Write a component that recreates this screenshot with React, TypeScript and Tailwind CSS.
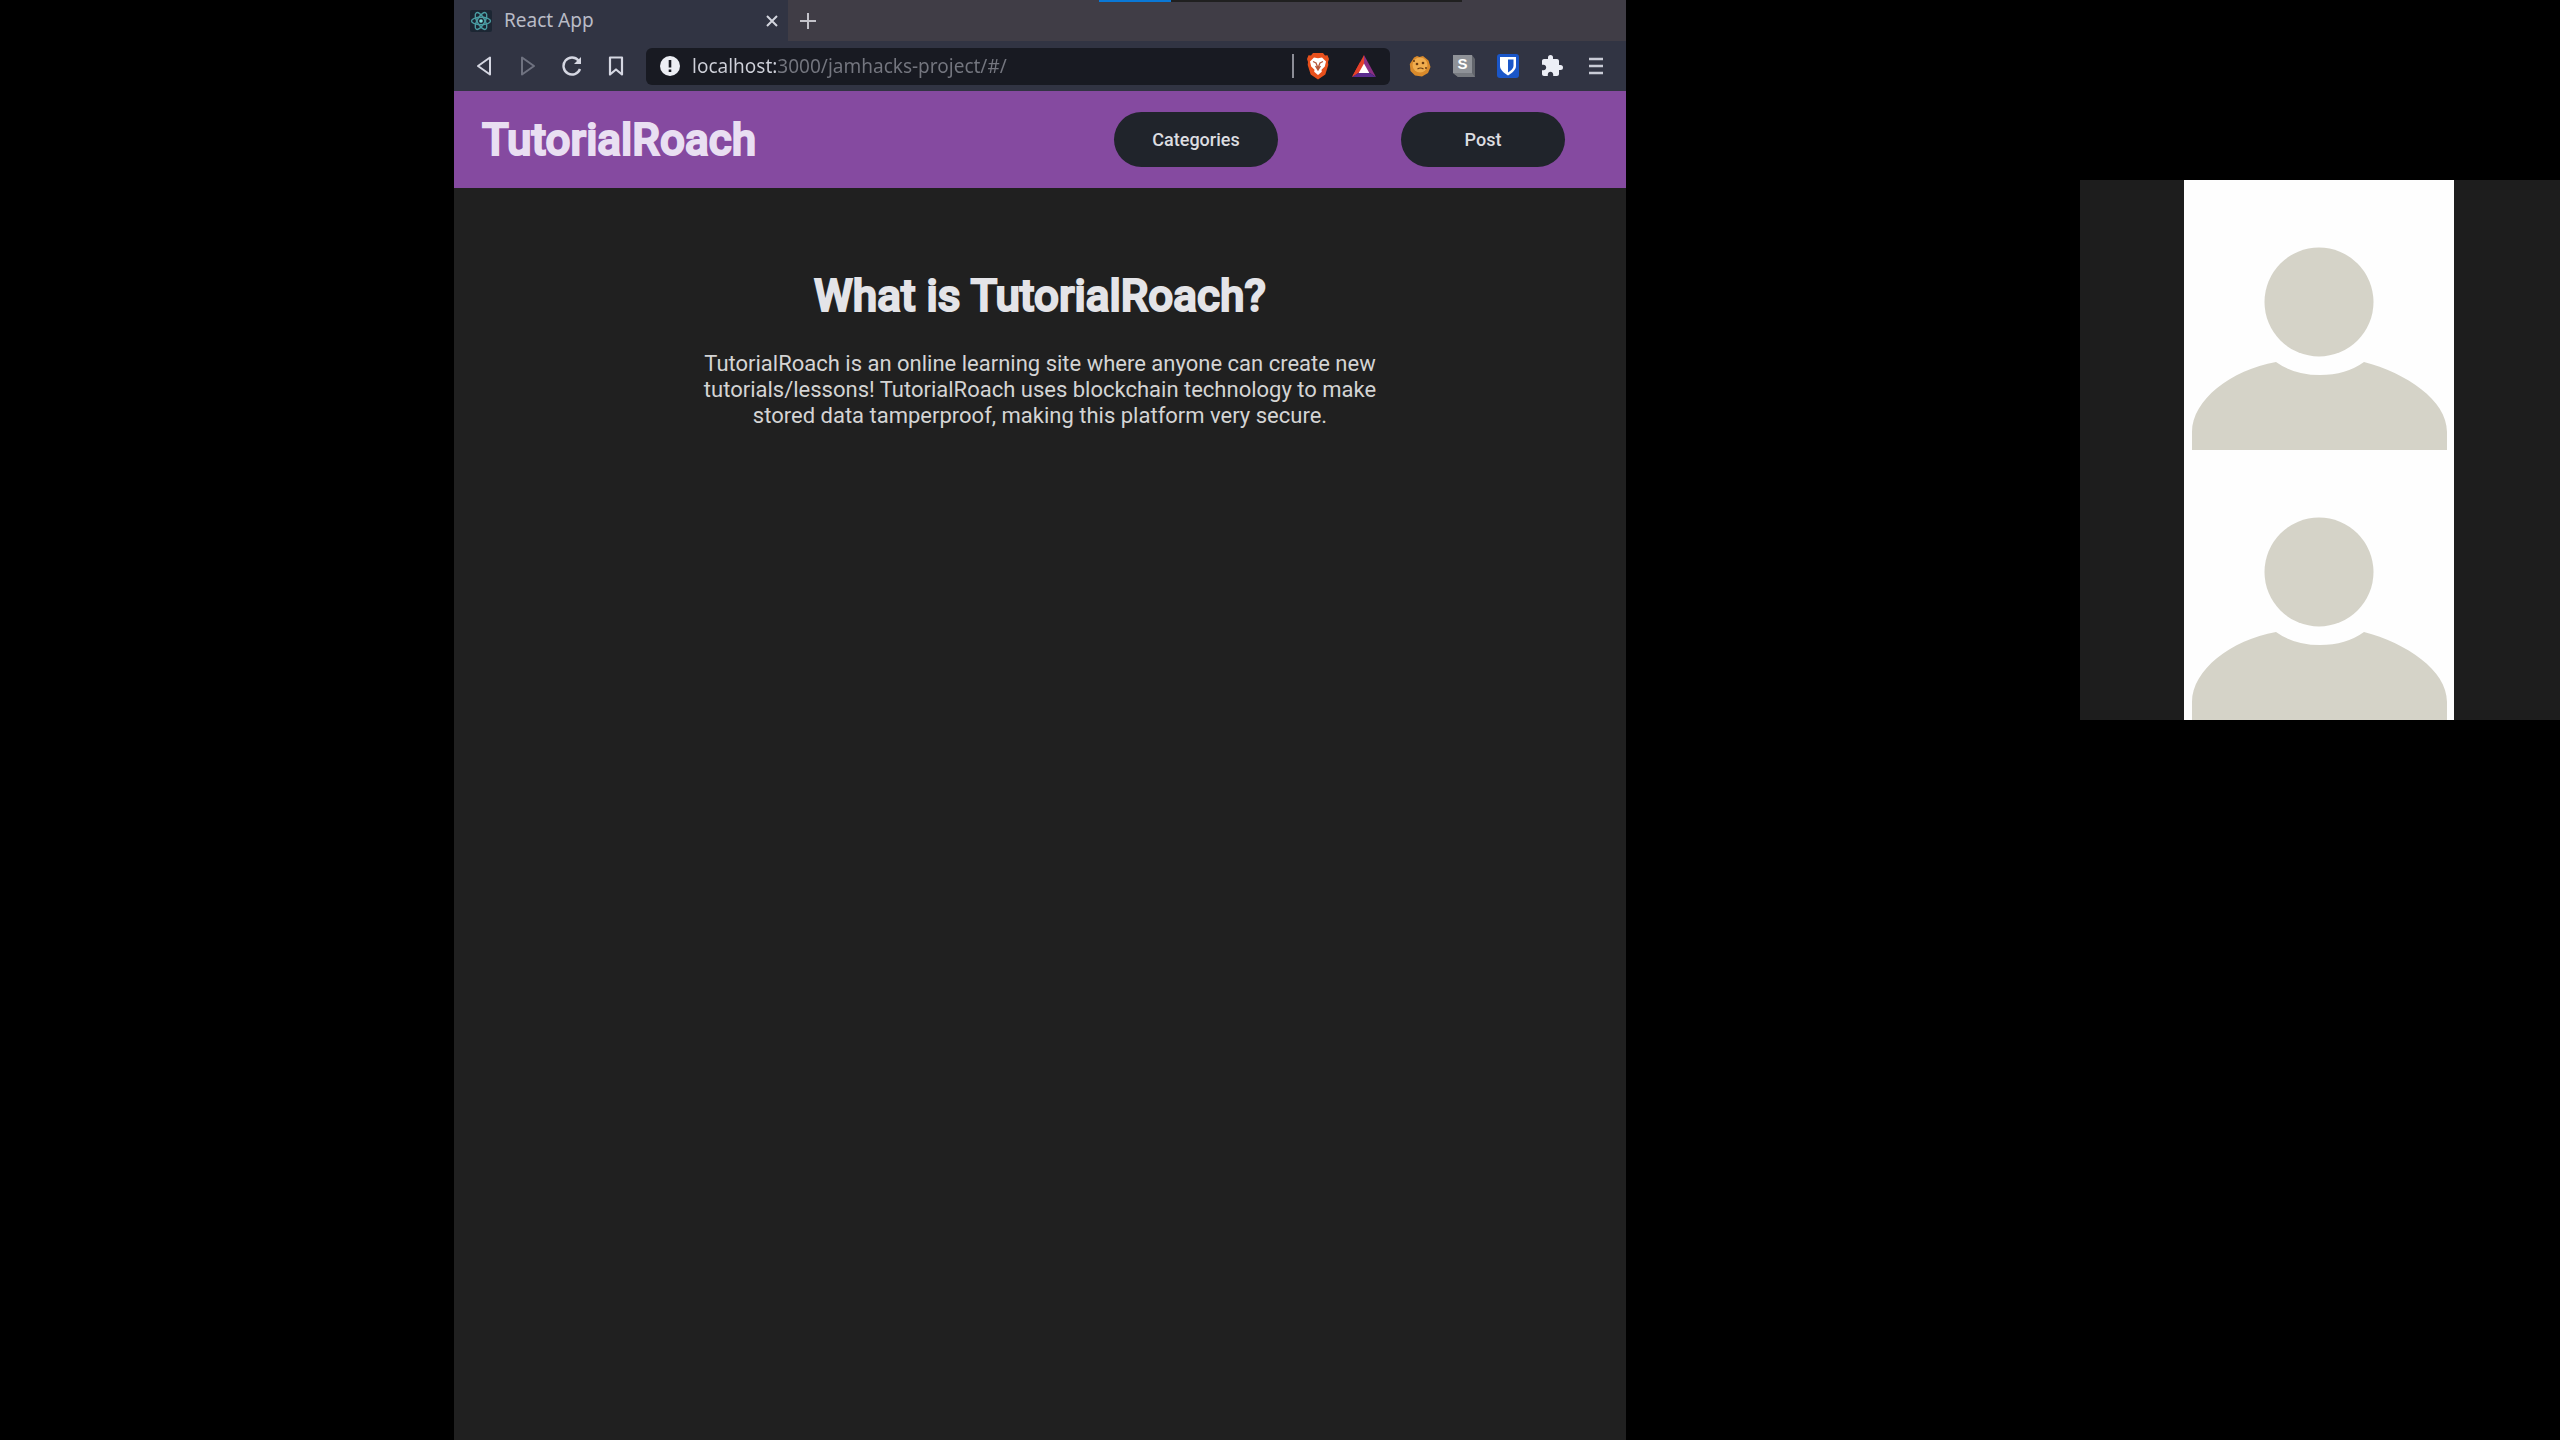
import type { ReactNode } from "react";
import { MdExtension } from "react-icons/md";

function ReactIcon() {
  return (
    <svg viewBox="0 0 22 22" className="size-[22px]" fill="none" stroke="#4a9da3" strokeWidth="1.4">
      <rect width="22" height="22" rx="2" fill="#1c2633" stroke="none" />
      <ellipse cx="11" cy="11" rx="9.5" ry="3.8" />
      <ellipse cx="11" cy="11" rx="9.5" ry="3.8" transform="rotate(60 11 11)" />
      <ellipse cx="11" cy="11" rx="9.5" ry="3.8" transform="rotate(120 11 11)" />
      <circle cx="11" cy="11" r="1.8" fill="#7fe0dc" stroke="none" />
    </svg>
  );
}

function BraveIcon() {
  return (
    <svg viewBox="0 0 24 28" className="h-7 w-6">
      <path d="M7 1h10l2 2.5 2.500-.3L23 7l-1 3 .3 3-3 9.500L12 27.500l-7.300-5L1.700 13 2 10 1 7l1.500-3.800 2.500.3z" fill="#e8501c" />
      <path d="M8 5.500l4 .8 4-.8 4 4-1.200 5-3.300 3.200.3 2L12 23l-3.800-3.300.3-2-3.300-3.200L4 9.500z" fill="#fff" />
      <path d="M7 9.500l3 1.500 2 5 2-5 3-1.500M9.500 14l2.500 4 2.500-4" fill="none" stroke="#b4583c" strokeWidth="1.300" />
    </svg>
  );
}

function BatIcon() {
  return (
    <svg viewBox="0 0 24 24" className="size-6">
      <path d="M12 1L0 23l12-8z" fill="#e5402a" />
      <path d="M12 1l12 22-12-8z" fill="#8c2f86" />
      <path d="M0 23h24l-12-8z" fill="#5a2c8e" />
      <path d="M0 23l8-5.500V8.300z" fill="#e5402a" />
      <path d="M12 9.500l5.300 9.500H6.700z" fill="#fff" />
    </svg>
  );
}

function CookieIcon() {
  return (
    <svg viewBox="0 0 22 22" className="size-[22px]">
      <path d="M5 2.500L8 1l2.500 1L14 1l5.500 4.500L21.500 12 19 18l-6 3.500-7-1L1.500 16 .8 9l2-3z" fill="#d98a2b" />
      <circle cx="11" cy="10" r="7.500" fill="#f0ad4e" />
      <g fill="#6b3c12">
        <circle cx="8" cy="9" r="1.300" />
        <circle cx="14" cy="8" r="1.300" />
        <circle cx="5" cy="6" r="1" />
        <circle cx="17" cy="13" r="1" />
      </g>
      <path d="M8.500 14q3-2 6 0" fill="none" stroke="#6b3c12" strokeWidth="1.200" />
    </svg>
  );
}

function StylusIcon() {
  return (
    <svg viewBox="0 0 24 24" className="size-6">
      <path d="M20 1l3 4v18H6l-5-4z" fill="#62656c" />
      <path d="M1 19l5 4h17l-3-4z" fill="#777a80" />
      <path d="M1 1h19v18H1z" fill="#8f9298" />
      <text x="10.500" y="15" textAnchor="middle" fill="#fff" fontSize="15" fontWeight="700" fontFamily="Liberation Sans, sans-serif">
        S
      </text>
    </svg>
  );
}

function BitwardenIcon() {
  return (
    <svg viewBox="0 0 24 24" className="size-6">
      <rect x="1" width="22" height="24" rx="3" fill="#1a56c8" />
      <path d="M4 3h16v9c0 4-4 7-8 9.500C8 19 4 16 4 12z" fill="#fff" />
      <path d="M12 5.500h5.500V12c0 2.500-2.500 4.800-5.500 6.500z" fill="#1a56c8" />
    </svg>
  );
}

function Avatar() {
  return (
    <svg viewBox="0 0 270 270" className="block w-[270px] bg-[#fefefe]" fill="#d5d3c8">
      <circle cx="135" cy="122" r="54.500" />
      <path d="M8 270V252C8 220 47 190 92 182Q110 195 136 195T180 182C222 193 263 220 263 252V270Z" />
    </svg>
  );
}

function IconButton({ label, children }: { label: string; children: ReactNode }) {
  return (
    <button aria-label={label} className="flex w-11 items-center justify-center">
      {children}
    </button>
  );
}

function Browser() {
  return (
    <div className="font-['Noto_Sans',sans-serif] text-[#b9bbc6]">
      <div className="relative flex h-[41px] items-center bg-[#403d46]">
        <div className="flex h-full w-[334px] items-center bg-[#313443] pl-4">
          <ReactIcon />
          <span className="ml-3 text-[19px]">React App</span>
          <button aria-label="Close tab" className="mr-2.5 ml-auto">
            <svg viewBox="0 0 12 12" className="size-3" stroke="#d3d5de" strokeWidth="2">
              <path d="M1 1l10 10M11 1L1 11" />
            </svg>
          </button>
        </div>
        <button aria-label="New tab" className="ml-3">
          <svg viewBox="0 0 16 16" className="size-4" stroke="#c4c3ca" strokeWidth="2">
            <path d="M8 0v16M0 8h16" />
          </svg>
        </button>
        <div className="absolute top-0 left-[55%] flex h-0.5 w-[31%] bg-[#202020]">
          <div className="w-1/5 bg-[#0a78d6]" />
        </div>
      </div>

      <div className="flex h-[50px] items-center bg-[#313443] px-2">
        <IconButton label="Back">
          <svg viewBox="0 0 16 20" className="h-5 w-4" fill="none" stroke="#d5d7e2" strokeWidth="2" strokeLinejoin="round">
            <path d="M14 1.500v17L2 10z" />
          </svg>
        </IconButton>
        <IconButton label="Forward">
          <svg viewBox="0 0 16 20" className="h-5 w-4" fill="none" stroke="#6f7280" strokeWidth="2" strokeLinejoin="round">
            <path d="M2 1.500v17L14 10z" />
          </svg>
        </IconButton>
        <IconButton label="Reload">
          <svg viewBox="0 0 20 20" className="size-5" fill="none" stroke="#d5d7e2" strokeWidth="2.400">
            <path d="M16.500 4.500A8.500 8.500 0 1 0 18 13" />
            <path d="M19 1v7h-7z" fill="#d5d7e2" stroke="none" />
          </svg>
        </IconButton>
        <IconButton label="Bookmark">
          <svg viewBox="0 0 16 20" className="h-5 w-4" fill="none" stroke="#d5d7e2" strokeWidth="2.200" strokeLinejoin="round">
            <path d="M2 1.500h12v17l-6-5-6 5z" />
          </svg>
        </IconButton>

        <div className="ml-2 flex h-[37px] flex-1 items-center rounded-md bg-[#181a22] pl-[14px]">
          <svg viewBox="0 0 20 20" className="size-5 shrink-0">
            <circle cx="10" cy="10" r="10" fill="#eceef4" />
            <path d="M10 4v7.500M10 13.500v2.500" stroke="#181a22" strokeWidth="2.600" />
          </svg>
          {/* the host part of the address is brighter than the rest */}
          <input
            aria-label="Address"
            type="text"
            defaultValue="localhost:3000/jamhacks-project/#/"
            className="ml-3 min-w-0 flex-1 bg-linear-to-r from-[#cfd1da] from-[84px] to-[#74767f] to-[84px] bg-clip-text text-[19px] text-transparent"
          />
          <div className="h-6 w-0.5 bg-[#8c8d96]" />
          <button aria-label="Brave Shields" className="ml-3">
            <BraveIcon />
          </button>
          <button aria-label="Brave Rewards" className="mr-[14px] ml-[22px]">
            <BatIcon />
          </button>
        </div>

        <div className="ml-2 flex">
          <IconButton label="Cookies">
            <CookieIcon />
          </IconButton>
          <IconButton label="Stylus">
            <StylusIcon />
          </IconButton>
          <IconButton label="Bitwarden">
            <BitwardenIcon />
          </IconButton>
          <IconButton label="Extensions">
            <MdExtension className="size-6 text-[#eceef6]" />
          </IconButton>
          <IconButton label="Menu">
            <svg viewBox="0 0 14 18" className="h-[18px] w-[14px]" stroke="#c9cbd6" strokeWidth="2.400">
              <path d="M0 2h14M0 9h14M0 16h14" />
            </svg>
          </IconButton>
        </div>
      </div>
    </div>
  );
}

function Site() {
  return (
    <div className="flex-1 bg-[#202020] font-[Roboto,sans-serif]">
      <header className="flex h-[97px] items-center justify-between bg-[#854aa0] pr-[61px] pl-7">
        <h1 className="text-[44px] font-medium text-[#e9dff2] [-webkit-text-stroke:2px_#e9dff2]">TutorialRoach</h1>
        <nav className="flex gap-[123px]">
          <button className="h-[55px] w-[164px] rounded-full bg-[#20242b] text-lg font-medium text-[#dcdde0]">
            Categories
          </button>
          <button className="h-[55px] w-[164px] rounded-full bg-[#20242b] text-lg font-medium text-[#dcdde0]">
            Post
          </button>
        </nav>
      </header>

      <main className="px-6 pt-[81px] text-center">
        <h2 className="text-[44px] leading-[54px] font-medium text-[#e4e4e8] [-webkit-text-stroke:2px_#e4e4e8]">
          What is TutorialRoach?
        </h2>
        <p className="mx-auto mt-7 max-w-[690px] text-[22px] leading-[26px] text-[#d4d4d4]">
          TutorialRoach is an online learning site where anyone can create new
          tutorials/lessons! TutorialRoach uses blockchain technology to make
          stored data tamperproof, making this platform very secure.
        </p>
      </main>
    </div>
  );
}

export default function App() {
  return (
    <div className="grid min-h-screen grid-cols-[454fr_1172fr_454fr_480fr] bg-black">
      <div className="col-start-2 flex flex-col">
        <Browser />
        <Site />
      </div>
      <aside className="col-start-4 mt-[180px] flex flex-col items-center self-start bg-[#1d1d1d] pr-0.5">
        <Avatar />
        <Avatar />
      </aside>
    </div>
  );
}
